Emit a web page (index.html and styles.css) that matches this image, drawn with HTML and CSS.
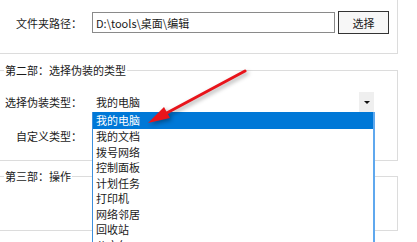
FILE: index.html
```html
<!DOCTYPE html>
<html lang="zh-CN">
<head>
    <meta charset="UTF-8">
    <title>伪装文件夹</title>
    <link rel="stylesheet" href="styles.css">
</head>
<body>
    <div class="page">
        <fieldset class="group group-path">
            <div class="row">
                <label class="label">文件夹路径：</label>
                <input class="path-input" type="text" value="D:\tools\桌面\编辑">
                <button class="pick-button">选择</button>
            </div>
        </fieldset>

        <fieldset class="group group-type">
            <legend class="legend">第二部：选择伪装的类型</legend>
            <div class="row row-combo">
                <label class="label">选择伪装类型：</label>
                <div class="combo">
                    <span class="combo-value">我的电脑</span>
                    <span class="combo-arrow"></span>
                    <ul class="combo-list">
                        <li class="selected">我的电脑</li>
                        <li>我的文档</li>
                        <li>拨号网络</li>
                        <li>控制面板</li>
                        <li>计划任务</li>
                        <li>打印机</li>
                        <li>网络邻居</li>
                        <li>回收站</li>
                        <li>公文包</li>
                    </ul>
                </div>
            </div>
            <div class="row row-custom">
                <label class="label">自定义类型：</label>
            </div>
        </fieldset>

        <fieldset class="group group-action">
            <legend class="legend">第三部：操作</legend>
            <div class="action-body"></div>
        </fieldset>

        <!-- red pointer drawn over the form -->
        <svg class="pointer" width="417" height="242" viewBox="0 0 417 242">
            <line x1="245" y1="71" x2="163" y2="115" stroke="#e8141b" stroke-width="3" stroke-linecap="round"/>
            <polygon points="148,123 170,118 164,107" fill="#e8141b"/>
        </svg>
    </div>
</body>
</html>
```

FILE: styles.css
```css
* {
    margin: 0;
    padding: 0;
    box-sizing: border-box;
}

body {
    background-color: #fff;
    color: #1a1a1a;
    font-family: "Noto Sans CJK SC", "Noto Sans", sans-serif;
    font-size: 11px;
    line-height: 16px;
    overflow: hidden;
    width: 417px;
    height: 242px;
}

.page {
    position: relative;
    width: 404px;
    margin: -14px 0 0 -6px;
}

.group {
    border: 1px solid #dcdcdc;
    padding: 0 0 0 7px;
    min-width: 0;
}

.legend {
    margin-left: 2px;
    padding: 0 1px;
    line-height: 16px;
}

.row {
    display: flex;
    align-items: center;
    gap: 10px;
}

.label {
    width: 80px;
    text-align: right;
    flex-shrink: 0;
}

/* group 1 */
.group-path {
    height: 68px;
    padding-top: 24px;
}

.group-path .row {
    height: 23px;
}

.path-input {
    width: 243px;
    height: 21px;
    border: 1px solid #8a8a8a;
    padding: 0 3px;
    font: inherit;
    color: #1a1a1a;
    outline: none;
}

.pick-button {
    width: 51px;
    height: 23px;
    margin-left: -7px;
    border: 1px solid #333;
    background-color: #f7f7f7;
    font: inherit;
    color: #1a1a1a;
}

/* group 2 */
.group-type {
    margin-top: 8px;
    padding-top: 14px;
    padding-bottom: 16px;
}

.row-combo {
    height: 20px;
    position: relative;
    z-index: 2;
}

.combo {
    position: relative;
    width: 283px;
    height: 20px;
    display: flex;
    align-items: center;
    justify-content: space-between;
}

.combo-value {
    padding-left: 4px;
}

.combo-arrow {
    width: 15px;
    height: 20px;
    margin-right: 1px;
    background-color: #efefef;
    position: relative;
}

.combo-arrow::after {
    content: "";
    position: absolute;
    left: 5px;
    top: 9px;
    border-left: 3px solid transparent;
    border-right: 3px solid transparent;
    border-top: 3px solid #111;
}

.combo-list {
    position: absolute;
    left: 0;
    top: 20px;
    width: 283px;
    height: 160px;
    list-style: none;
    background-color: #fff;
    border-left: 1px solid #3c8fdd;
    border-right: 2px solid #5fa8ee;
}

.combo-list li {
    height: 15.5px;
    line-height: 15.5px;
    padding-left: 3px;
}

.combo-list li.selected {
    height: 17px;
    line-height: 17px;
    background-color: #0078d7;
    color: #fff;
}

.row-custom {
    margin-top: 16px;
    height: 16px;
}

/* group 3 */
.group-action {
    margin-top: 7px;
}

.action-body {
    height: 46px;
}

.pointer {
    position: absolute;
    left: 6px;
    top: 14px;
    z-index: 3;
    filter: drop-shadow(2px 2px 2px rgba(0, 0, 0, 0.35));
}
```
